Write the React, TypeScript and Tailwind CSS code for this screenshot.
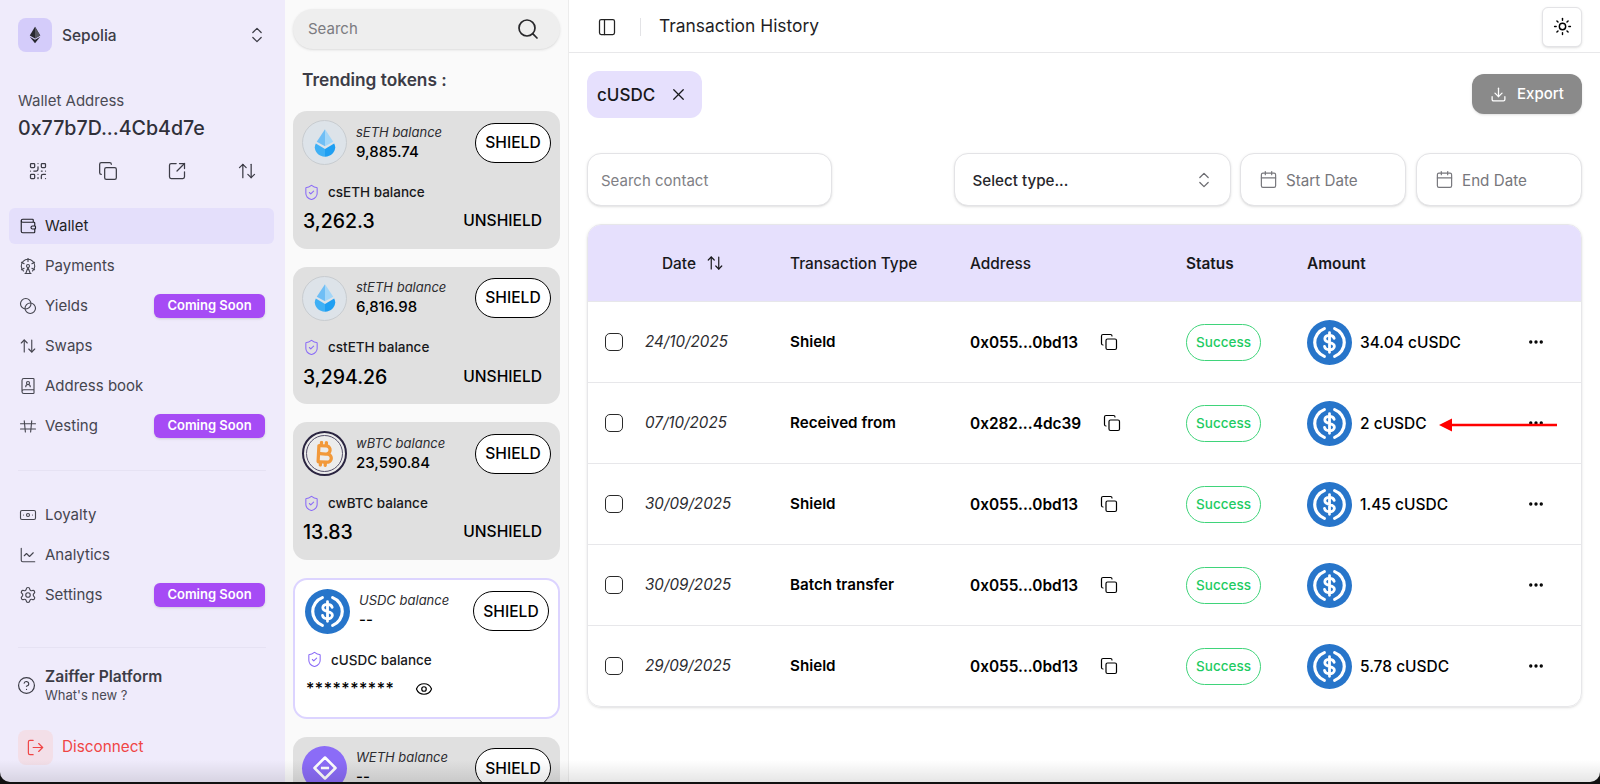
import {
  ArrowUpDown,
  Banknote,
  Blend,
  BookUser,
  Calendar,
  ChartLine,
  ChevronsUpDown,
  CircleHelp,
  Copy,
  Download,
  Ellipsis,
  Eye,
  FerrisWheel,
  LogOut,
  PanelLeft,
  QrCode,
  Search,
  Settings,
  ShieldCheck,
  SquareArrowOutUpRight,
  Sun,
  Wallet,
  X,
} from "lucide-react";
import { FaBitcoinSign } from "react-icons/fa6";
import type { ReactNode } from "react";

const EthLogo = () => (
  <svg viewBox="0 0 24 24" className="h-[18px] w-[18px]">
    <path d="M12 1 5 12.5 12 16.5 19 12.5Z" fill="#27272f" />
    <path d="M12 1 19 12.5 12 16.5Z" fill="#55555f" />
    <path d="M5 14.2 12 23 19 14.2 12 18.2Z" fill="#27272f" />
  </svg>
);

const UsdcLogo = () => (
  <svg viewBox="0 0 48 48" className="h-[45px] w-[45px] shrink-0">
    <circle cx="24" cy="24" r="24" fill="#2775ca" />
    <path
      d="M18.5 9.2a15.8 15.8 0 0 0 0 29.6M29.5 9.2a15.8 15.8 0 0 1 0 29.6"
      fill="none"
      stroke="#fff"
      strokeWidth="3.4"
      strokeLinecap="round"
    />
    <path
      d="M29 19.6c-.5-2.2-2.4-3.3-5-3.3-2.9 0-5 1.5-5 3.8 0 5.6 10.2 2.4 10.2 7.8 0 2.3-2.2 3.8-5.2 3.8-2.8 0-4.8-1.2-5.3-3.5M24 13.5v21"
      fill="none"
      stroke="#fff"
      strokeWidth="3"
      strokeLinecap="round"
    />
  </svg>
);

const DropLogo = () => (
  <div className="flex h-[45px] w-[45px] shrink-0 items-center justify-center rounded-full border border-[#c8ccd0] bg-[#dde3e9]">
    <svg viewBox="0 0 24 30" className="h-[28px] w-[22px]">
      <path d="M12 0 3 13.5 12 18.5Z" fill="#6fbef5" />
      <path d="M12 0 21 13.5 12 18.5Z" fill="#a3d6f8" />
      <path d="M2 15.5C-1.5 21.5 3.5 30 12 30V21.5Z" fill="#3fb0f5" />
      <path d="M22 15.5C25.5 21.5 20.5 30 12 30V21.5Z" fill="#1f9ff2" />
    </svg>
  </div>
);

const BtcLogo = () => (
  <div className="flex h-[45px] w-[45px] shrink-0 items-center justify-center rounded-full border-[2px] border-[#2a2440] bg-[#ececec]">
    <div className="flex h-[37px] w-[37px] items-center justify-center rounded-full border border-[#56506a]">
      <FaBitcoinSign className="h-[26px] w-[26px] rotate-[3deg] text-[#f2993a]" />
    </div>
  </div>
);

const WethLogo = () => (
  <div className="flex h-[45px] w-[45px] shrink-0 items-center justify-center rounded-full bg-[#8b6cf7]">
    <svg viewBox="0 0 24 24" className="h-[28px] w-[28px]" fill="none" stroke="#fff" strokeWidth="2.2" strokeLinejoin="round">
      <path d="M12 3 21 12 12 21 3 12Z" />
      <path d="M8.5 12h7" />
    </svg>
  </div>
);

const VestingIcon = ({ className }: { className: string }) => (
  <svg viewBox="0 0 24 24" className={className} fill="none" stroke="currentColor" strokeWidth="1.5" strokeLinecap="round">
    <path d="M2 9h20M2 16h20M7 5l1.5 15M17 5l-1.5 15" />
  </svg>
);

type NavItem = {
  label: string;
  icon: ReactNode;
  soon?: boolean;
  active?: boolean;
};

const iconCls = "h-[18px] w-[18px]";

const mainNav: NavItem[] = [
  { label: "Wallet", icon: <Wallet className={iconCls} strokeWidth={1.5} />, active: true },
  { label: "Payments", icon: <FerrisWheel className={iconCls} strokeWidth={1.5} /> },
  { label: "Yields", icon: <Blend className={iconCls} strokeWidth={1.5} />, soon: true },
  { label: "Swaps", icon: <ArrowUpDown className={iconCls} strokeWidth={1.5} /> },
  { label: "Address book", icon: <BookUser className={iconCls} strokeWidth={1.5} /> },
  { label: "Vesting", icon: <VestingIcon className={iconCls} />, soon: true },
];

const otherNav: NavItem[] = [
  { label: "Loyalty", icon: <Banknote className={iconCls} strokeWidth={1.5} /> },
  { label: "Analytics", icon: <ChartLine className={iconCls} strokeWidth={1.5} /> },
  { label: "Settings", icon: <Settings className={iconCls} strokeWidth={1.5} />, soon: true },
];

const NavRow = ({ item }: { item: NavItem }) => (
  <div
    className={`flex h-[36px] w-[265px] items-center rounded-[6px] pl-[10px] text-[15px] ${
      item.active ? "bg-[#e4dffb] text-[#1f1f26]" : "text-[#45454f]"
    }`}
  >
    <span className="flex w-[26px] shrink-0 items-center">{item.icon}</span>
    <span className="pt-px">{item.label}</span>
    {item.soon && (
      <span className="ml-auto mr-[9px] flex h-[24px] w-[111px] items-center justify-center rounded-[6px] bg-[#a64bf5] text-[13px] font-semibold text-white shadow-sm">
        Coming Soon
      </span>
    )}
  </div>
);

const Sidebar = () => (
  <aside className="flex h-full w-[285px] shrink-0 flex-col bg-[#efebfb] pt-[18px]">
    <div className="flex items-center pl-[18px] pr-[18px]">
      <div className="flex h-[34px] w-[34px] items-center justify-center rounded-[8px] bg-[#d4ccfa]">
        <EthLogo />
      </div>
      <span className="ml-[10px] pt-[2px] text-[15.5px] font-medium text-[#3c3c46]">Sepolia</span>
      <ChevronsUpDown className="ml-auto h-[20px] w-[20px] text-[#3c3c46]" strokeWidth={1.5} />
    </div>
    <div className="mt-[39px] pl-[18px] text-[15px] leading-[20px] text-[#4a4a54]">Wallet Address</div>
    <div className="mt-[4px] pl-[18px] text-[19.6px] font-medium leading-[26px] text-[#30303a]">
      0x77b7D...4Cb4d7e
    </div>
    <div className="mt-[20px] flex h-[20px] items-center justify-between px-[28px] text-[#3c3c46]">
      <QrCode className="h-[20px] w-[20px]" strokeWidth={1.5} />
      <Copy className="h-[20px] w-[20px]" strokeWidth={1.5} />
      <SquareArrowOutUpRight className="h-[20px] w-[20px]" strokeWidth={1.5} />
      <ArrowUpDown className="h-[20px] w-[20px]" strokeWidth={1.5} />
    </div>
    <nav className="mt-[27px] flex flex-col gap-[4px] pl-[9px]">
      {mainNav.map((item) => (
        <NavRow key={item.label} item={item} />
      ))}
    </nav>
    <div className="ml-[18px] mr-[19px] mt-[26px] h-px bg-[#e6e2f3]" />
    <nav className="mt-[26px] flex flex-col gap-[4px] pl-[9px]">
      {otherNav.map((item) => (
        <NavRow key={item.label} item={item} />
      ))}
    </nav>
    <div className="ml-[18px] mr-[19px] mt-[34px] h-px bg-[#e6e2f3]" />
    <div className="mt-[19px] flex items-center pl-[17px]">
      <CircleHelp className="h-[19px] w-[19px] text-[#3c3c46]" strokeWidth={1.5} />
      <div className="ml-[9px]">
        <div className="text-[15.6px] font-semibold leading-[20px] text-[#3c3c46]">Zaiffer Platform</div>
        <div className="text-[13px] leading-[16px] text-[#4a4a54]">What's new ?</div>
      </div>
    </div>
    <div className="mt-[27px] flex items-center pl-[18px]">
      <div className="flex h-[35px] w-[35px] items-center justify-center rounded-[8px] bg-[#f3dfe8]">
        <LogOut className="h-[19px] w-[19px] text-[#f04545]" strokeWidth={1.5} />
      </div>
      <span className="ml-[9px] text-[15.3px] text-[#f04545]">Disconnect</span>
    </div>
  </aside>
);

type Token = {
  name: string;
  value: string;
  logo: ReactNode;
  shielded: string;
  shieldedValue: string;
};

const tokens: Token[] = [
  { name: "sETH", value: "9,885.74", logo: <DropLogo />, shielded: "csETH", shieldedValue: "3,262.3" },
  { name: "stETH", value: "6,816.98", logo: <DropLogo />, shielded: "cstETH", shieldedValue: "3,294.26" },
  { name: "wBTC", value: "23,590.84", logo: <BtcLogo />, shielded: "cwBTC", shieldedValue: "13.83" },
];

const ShieldButton = () => (
  <button className="ml-auto flex h-[40px] w-[76px] shrink-0 items-center justify-center rounded-full border border-black bg-white text-[15.6px] font-medium text-black">
    SHIELD
  </button>
);

const TokenHead = ({ name, value, logo }: { name: string; value: string; logo: ReactNode }) => (
  <div className="flex items-center">
    {logo}
    <div className="ml-[9px] -mt-[2px]">
      <div className="text-[13px] italic leading-[20px] text-[#2c2c30]">{name} balance</div>
      <div className="text-[15px] font-medium leading-[20px] text-black">{value}</div>
    </div>
    <ShieldButton />
  </div>
);

const TokenCard = ({ token }: { token: Token }) => (
  <div className="h-[137.6px] shrink-0 rounded-[14px] bg-[#e0e0e0] px-[9px] pt-[9px]">
    <TokenHead name={token.name} value={token.value} logo={token.logo} />
    <div className="ml-[1px] mt-[18px] flex h-[18px] items-center">
      <ShieldCheck className="h-[17px] w-[17px] text-[#8b6cf7]" strokeWidth={1.5} />
      <span className="ml-[8px] text-[13.5px] font-medium text-[#18181b]">{token.shielded} balance</span>
    </div>
    <div className="mt-[7px] flex items-center justify-between pr-[9px]">
      <span className="ml-[1px] text-[19.5px] font-medium leading-[26px] text-black">{token.shieldedValue}</span>
      <span className="text-[15.6px] font-medium text-black">UNSHIELD</span>
    </div>
  </div>
);

const TokenColumn = () => (
  <section className="flex h-full w-[284px] shrink-0 flex-col overflow-hidden border-r border-[#ececec] bg-[#fafafa] px-[8px] pt-[9px]">
    <div className="flex h-[40px] shrink-0 items-center rounded-full bg-[#eeeeee] pl-[15px] pr-[20px] shadow-sm">
      <span className="text-[15px] text-[#7b7b80]">Search</span>
      <Search className="ml-auto h-[24px] w-[24px] text-[#27272a]" strokeWidth={1.7} />
    </div>
    <h2 className="ml-[9px] mt-[20px] text-[17.3px] font-semibold leading-[22px] text-[#3c3c46]">Trending tokens :</h2>
    <div className="mt-[20px] flex flex-col gap-[18px]">
      {tokens.map((token) => (
        <TokenCard key={token.name} token={token} />
      ))}
      <div className="h-[141px] shrink-0 rounded-[14px] border-[2px] border-[#dcd4ff] bg-white pl-[10px] pr-[9px] pt-[9px]">
        <TokenHead name="USDC" value="--" logo={<UsdcLogo />} />
        <div className="ml-[1px] mt-[17px] flex h-[18px] items-center">
          <ShieldCheck className="h-[17px] w-[17px] text-[#8b6cf7]" strokeWidth={1.5} />
          <span className="ml-[8px] text-[13.5px] font-medium text-[#18181b]">cUSDC balance</span>
        </div>
        <div className="mt-[6px] flex h-[26px] items-center">
          <span className="ml-[1px] text-[16px] font-medium leading-[20px] tracking-[0.5px] text-black">**********</span>
          <Eye className="ml-[21px] mt-[3px] h-[18px] w-[18px] text-black" strokeWidth={1.6} />
        </div>
      </div>
      <div className="h-[120px] shrink-0 rounded-[14px] bg-[#e0e0e0] px-[9px] pt-[9px]">
        <TokenHead name="WETH" value="--" logo={<WethLogo />} />
      </div>
    </div>
  </section>
);

type Tx = { date: string; type: string; address: string; amount: string };

const txs: Tx[] = [
  { date: "24/10/2025", type: "Shield", address: "0x055...0bd13", amount: "34.04 cUSDC" },
  { date: "07/10/2025", type: "Received from", address: "0x282...4dc39", amount: "2 cUSDC" },
  { date: "30/09/2025", type: "Shield", address: "0x055...0bd13", amount: "1.45 cUSDC" },
  { date: "30/09/2025", type: "Batch transfer", address: "0x055...0bd13", amount: "" },
  { date: "29/09/2025", type: "Shield", address: "0x055...0bd13", amount: "5.78 cUSDC" },
];

const gridCols = "grid grid-cols-[57px_145px_180px_216px_121px_1fr_54px] items-center";

const TxRow = ({ tx }: { tx: Tx }) => (
  <div className={`${gridCols} h-[81px] border-t border-[#e7e7ea] text-black`}>
    <div className="pl-[17px]">
      <div className="h-[18px] w-[18px] rounded-[5px] border border-[#2a2a2a] bg-white" />
    </div>
    <div className="pt-px text-[15.2px] italic text-[#2c2c30]">{tx.date}</div>
    <div className="pt-px text-[15.2px] font-semibold">{tx.type}</div>
    <div className="flex items-center pt-px text-[15.4px] font-semibold">
      <span>{tx.address}</span>
      <Copy className="ml-[22px] h-[18px] w-[18px]" strokeWidth={1.6} />
    </div>
    <div>
      <span className="flex h-[37px] w-[75px] items-center justify-center rounded-full border border-[#3fd47a] text-[13.5px] font-medium text-[#1ecb62]">
        Success
      </span>
    </div>
    <div className="flex items-center">
      <UsdcLogo />
      <span className="ml-[8px] whitespace-nowrap pt-px text-[15.5px] font-medium">{tx.amount}</span>
    </div>
    <div>
      <Ellipsis className="h-[18px] w-[18px] text-black" strokeWidth={2.5} />
    </div>
  </div>
);

const DateField = ({ label }: { label: string }) => (
  <div className="flex h-[53px] w-[166px] items-center rounded-[14px] border border-[#e3e3e6] bg-white pl-[18px] text-[15.2px] text-[#77777c] shadow-sm">
    <Calendar className="h-[19px] w-[19px]" strokeWidth={1.5} />
    <span className="ml-[8px] pt-[3px]">{label}</span>
  </div>
);

const MainPanel = () => (
  <main className="relative flex h-full min-w-0 flex-1 flex-col bg-white">
    <header className="flex h-[53px] shrink-0 items-center border-b border-[#e8e8ea] pl-[28px] pr-[18px] pt-px">
      <PanelLeft className="h-[20px] w-[20px] text-[#222]" strokeWidth={1.5} />
      <div className="ml-[23px] h-[18px] w-px bg-[#e3e3e6]" />
      <h1 className="ml-[18px] text-[17.4px] text-[#1f1f26]">Transaction History</h1>
      <button className="ml-auto flex h-[40px] w-[40px] items-center justify-center rounded-[6px] border border-[#e3e3e6] bg-white shadow-sm">
        <Sun className="h-[19px] w-[19px] text-black" strokeWidth={1.8} />
      </button>
    </header>
    <div className="flex flex-col px-[18px]">
      <div className="mt-[18px] flex items-start justify-between">
        <div className="flex h-[47px] w-[115px] items-center rounded-[12px] bg-[#e6e0fd] pl-[10px]">
          <span className="pt-[2px] text-[17px] font-medium text-[#18181b]">cUSDC</span>
          <X className="ml-[14px] h-[19px] w-[19px] text-[#18181b]" strokeWidth={1.6} />
        </div>
        <button className="mt-[3px] flex h-[40px] w-[110px] items-center justify-center rounded-[12px] bg-[#8a8a8a] text-[15px] font-medium text-white shadow-sm">
          <Download className="mr-[10px] h-[17px] w-[17px]" strokeWidth={1.8} />
          <span className="pt-px">Export</span>
        </button>
      </div>
      <div className="mt-[35px] flex">
        <div className="flex h-[53px] w-[245px] items-center rounded-[14px] border border-[#e3e3e6] bg-white pl-[13px] pt-[3px] text-[15px] text-[#808085] shadow-sm">
          Search contact
        </div>
        <div className="ml-[122px] flex h-[53px] w-[278px] items-center rounded-[14px] border border-[#e3e3e6] bg-white pl-[18px] pr-[16px] text-[15.2px] font-medium text-[#26262b] shadow-sm">
          <span className="pt-[3px]">Select type...</span>
          <ChevronsUpDown className="ml-auto h-[20px] w-[20px] text-[#6b6b70]" strokeWidth={1.5} />
        </div>
        <div className="ml-[9px]">
          <DateField label="Start Date" />
        </div>
        <div className="ml-[10px]">
          <DateField label="End Date" />
        </div>
      </div>
      <div className="relative mt-[18px] overflow-hidden rounded-[14px] border border-[#e7e7ea] shadow-sm">
        <div className={`${gridCols} h-[76px] bg-[#e6e0fd] pt-px text-[15.4px] font-medium text-[#18181b]`}>
          <div />
          <div className="flex items-center pl-[17px]">
            Date
            <ArrowUpDown className="ml-[10px] h-[18px] w-[18px]" strokeWidth={1.6} />
          </div>
          <div>Transaction Type</div>
          <div>Address</div>
          <div className="font-semibold">Status</div>
          <div className="font-semibold">Amount</div>
          <div />
        </div>
        {txs.map((tx, i) => (
          <TxRow key={i} tx={tx} />
        ))}
        <svg viewBox="0 0 120 16" className="absolute left-[850px] top-[192px] h-[16px] w-[120px]">
          <path d="M13 8H119" stroke="#ff0000" strokeWidth="2.4" />
          <path d="M1 8 14 1.5V14.5Z" fill="#ff0000" />
        </svg>
      </div>
    </div>
  </main>
);

export default function App() {
  return (
    <div className="h-[784px] w-[1600px] overflow-hidden bg-[#111] font-['Inter',sans-serif]">
      <div className="relative flex h-[782px] overflow-hidden rounded-b-[10px]">
        <Sidebar />
        <TokenColumn />
        <MainPanel />
        <div className="pointer-events-none absolute inset-x-0 bottom-0 h-[22px] bg-gradient-to-t from-black/10 to-transparent" />
      </div>
    </div>
  );
}
